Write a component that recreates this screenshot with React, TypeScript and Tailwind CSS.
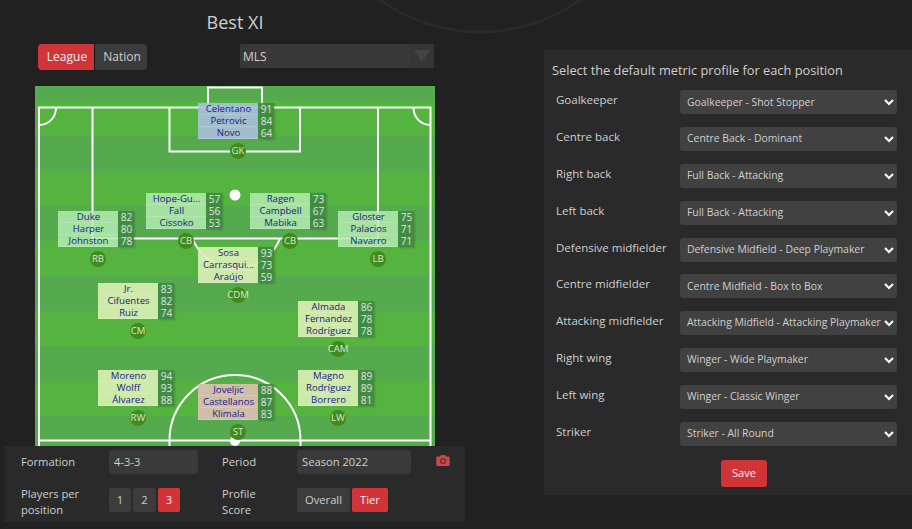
interface Player {
  name: string;
  score: number;
}

interface Slot {
  label: string;
  left: string;
  top: string;
  tone: string;
  players: Player[];
}

const p = (name: string, score: number): Player => ({ name, score });

const slots: Slot[] = [
  { label: 'GK', left: 'left-[163px]', top: 'top-[17px]', tone: 'bg-[#aabfdc]/90', players: [p('Celentano', 91), p('Petrovic', 84), p('Novo', 64)] },
  { label: 'CB', left: 'left-[111px]', top: 'top-[107px]', tone: 'bg-[#b4ebb0]/85', players: [p('Hope-Gu...', 57), p('Fall', 56), p('Cissoko', 53)] },
  { label: 'CB', left: 'left-[215px]', top: 'top-[107px]', tone: 'bg-[#b4ebb0]/85', players: [p('Ragen', 73), p('Campbell', 67), p('Mabika', 63)] },
  { label: 'RB', left: 'left-[23px]', top: 'top-[125px]', tone: 'bg-[#b4ebb0]/85', players: [p('Duke', 82), p('Harper', 80), p('Johnston', 78)] },
  { label: 'LB', left: 'left-[303px]', top: 'top-[125px]', tone: 'bg-[#b4ebb0]/85', players: [p('Gloster', 75), p('Palacios', 71), p('Navarro', 71)] },
  { label: 'CDM', left: 'left-[163px]', top: 'top-[161px]', tone: 'bg-[#dcefb4]/90', players: [p('Sosa', 93), p('Carrasqui...', 73), p('Araújo', 59)] },
  { label: 'CM', left: 'left-[63px]', top: 'top-[197px]', tone: 'bg-[#dcefb4]/90', players: [p('Jr.', 83), p('Cifuentes', 82), p('Ruiz', 74)] },
  { label: 'CAM', left: 'left-[263px]', top: 'top-[215px]', tone: 'bg-[#dcefb4]/90', players: [p('Almada', 86), p('Fernandez', 78), p('Rodríguez', 78)] },
  { label: 'RW', left: 'left-[63px]', top: 'top-[284px]', tone: 'bg-[#dcefb4]/90', players: [p('Moreno', 94), p('Wolff', 93), p('Álvarez', 88)] },
  { label: 'ST', left: 'left-[163px]', top: 'top-[298px]', tone: 'bg-[#d8bfae]/95', players: [p('Joveljic', 88), p('Castellanos', 87), p('Klimala', 83)] },
  { label: 'LW', left: 'left-[263px]', top: 'top-[284px]', tone: 'bg-[#dcefb4]/90', players: [p('Magno', 89), p('Rodríguez', 89), p('Borrero', 81)] },
];

const profiles = [
  ['Goalkeeper', 'Goalkeeper - Shot Stopper'],
  ['Centre back', 'Centre Back - Dominant'],
  ['Right back', 'Full Back - Attacking'],
  ['Left back', 'Full Back - Attacking'],
  ['Defensive midfielder', 'Defensive Midfield - Deep Playmaker'],
  ['Centre midfielder', 'Centre Midfield - Box to Box'],
  ['Attacking midfielder', 'Attacking Midfield - Attacking Playmaker'],
  ['Right wing', 'Winger - Wide Playmaker'],
  ['Left wing', 'Winger - Classic Winger'],
  ['Striker', 'Striker - All Round'],
];

// pitch lines, coordinates are relative to the pitch corner
const PitchLines = () => (
  <svg className="absolute inset-0" width="400" height="360" viewBox="0 0 400 360" fill="none" stroke="#fff" strokeWidth="2">
    {[15, 85, 155, 225, 295].map((y) => (
      <rect key={y} x="0" y={y} width="400" height="35" fill="#55b33f" stroke="none" />
    ))}
    <path d="M4 360V21.5H395.5V360" />
    <path d="M173 21.5V1.5H227V21.5" />
    <path d="M134.5 21.5V65.5H265V21.5" />
    <path d="M57.5 21.5V152.5H343V21.5" />
    <path d="M157.5 152.5A47 47 0 0 0 245 152.5" />
    <path d="M4 39A17 17 0 0 0 21 21.5M395.5 39A17 17 0 0 1 378.5 21.5" />
    <path d="M4 354.5H395.5" />
    <path d="M134.5 360V354.5A65.5 65.5 0 0 1 265.5 354.5V360" />
    <circle cx="200" cy="109" r="5.5" fill="#fff" stroke="none" />
    <circle cx="200" cy="355" r="5" fill="#fff" stroke="none" />
  </svg>
);

const Position = ({ slot }: { slot: Slot }) => (
  <div className={`absolute ${slot.left} ${slot.top} flex w-[80px] flex-col items-center`}>
    <div className="w-full pr-[4px]">
      {slot.players.map((player) => (
        <div key={player.name} className="flex h-[12px] w-[76px] text-[9.6px] leading-[12px]">
          <div className={`w-[60px] overflow-hidden pl-[1px] text-center text-[#20208c] ${slot.tone} shadow-[inset_0_-1px_0_rgba(255,255,255,0.18)]`}>{player.name}</div>
          <div className="w-[16px] bg-[#3e8a42]/90 pl-[1px] text-center text-[10px] text-[#e2e2e2] shadow-[1px_1px_2px_rgba(0,0,0,0.18)]">{player.score}</div>
        </div>
      ))}
    </div>
    <div className="relative mt-[4px] flex size-[16px] items-center justify-center whitespace-nowrap rounded-full bg-[#418a1c] text-[9.6px] leading-none text-[#dbe8d2]">
      {slot.label}
    </div>
  </div>
);

const CameraIcon = () => (
  <svg className="absolute left-[431px] top-[9px]" width="14" height="11" viewBox="0 0 14 11">
    <path d="M1.5 1.5H4L5 0H9L10 1.5H12.5A1.2 1.2 0 0 1 13.7 2.7V9.8A1.2 1.2 0 0 1 12.5 11H1.5A1.2 1.2 0 0 1 .3 9.8V2.7A1.2 1.2 0 0 1 1.5 1.5Z" fill="#c8494b" />
    <circle cx="7" cy="6" r="2.4" fill="none" stroke="#6e2a2c" strokeWidth="1.2" />
  </svg>
);

export default function App() {
  return (
    <div className="relative flex h-[529px] w-[912px] overflow-hidden bg-[#212121] font-['Open_Sans','Liberation_Sans',sans-serif] text-[#cfcfcf]">
      {/* faint circle behind the page */}
      <svg className="absolute left-0 top-0" width="912" height="40" fill="none">
        <circle cx="480" cy="-140" r="172" stroke="#2a2a2a" strokeWidth="3" />
      </svg>

      <div className="relative flex w-[544px] shrink-0 flex-col">
        <div className="w-[470px] pt-[10px] text-center text-[18px] leading-[24px]">Best XI</div>

        <div className="mt-[10px] flex items-start pl-[38px]">
          <button className="h-[26px] w-[57px] rounded-l-[4px] border-r border-black bg-[#d13438] pl-[2px] text-[12px] text-[#f0f0f0]">League</button>
          <button className="h-[26px] w-[52px] rounded-r-[4px] bg-[#3c3c3c] pl-[2px] text-[12px]">Nation</button>
          <div className="ml-[93px] flex h-[24px] w-[194px] items-center justify-between rounded-[2px] bg-[#393939] pl-[3px] pt-[1px] text-[12px]">
            MLS
            <div className="-mt-[1px] flex h-[24px] w-[24px] items-center justify-center bg-[#363636]">
              <div className="border-x-[8px] border-t-[12px] border-x-transparent border-t-[#444444]" />
            </div>
          </div>
        </div>

        <div className="relative ml-[35px] mt-[16px] h-[360px] w-[400px] bg-[#55aa4e]">
          <PitchLines />
          {slots.map((slot) => (
            <Position key={slot.label + slot.left} slot={slot} />
          ))}
        </div>

        <div className="relative ml-[5px] grid h-[76px] w-[460px] grid-cols-[104px_113px_75px_168px] grid-rows-[24px_24px] content-between bg-[#2a2a2a] pb-[10px] pt-[4px] text-[11.2px]">
          <div className="self-center pl-[16px]">Formation</div>
          <div className="flex h-[24px] w-[89px] items-center rounded-[3px] bg-[#3a3a3a] pl-[5px]">4-3-3</div>
          <div className="self-center">Period</div>
          <div className="flex h-[24px] w-[114px] items-center rounded-[3px] bg-[#3a3a3a] pl-[5px]">Season 2022</div>
          <div className="self-center pl-[16px] pt-[4px] leading-[16px]">Players per position</div>
          <div className="flex gap-[2px]">
            <button className="h-[24px] w-[22px] rounded-[2px] bg-[#3c3c3c]">1</button>
            <button className="h-[24px] w-[23px] rounded-[2px] bg-[#3c3c3c]">2</button>
            <button className="h-[24px] w-[22px] rounded-[2px] bg-[#d13438] text-[#f0f0f0]">3</button>
          </div>
          <div className="w-[50px] self-center pt-[4px] leading-[16px]">Profile Score</div>
          <div className="flex gap-[2px]">
            <button className="h-[24px] w-[53px] rounded-[2px] bg-[#3c3c3c]">Overall</button>
            <button className="h-[24px] w-[36px] rounded-[2px] bg-[#d13438] text-[#f0f0f0]">Tier</button>
          </div>
          <CameraIcon />
        </div>
      </div>

      <div className="relative mt-[50px] h-[445px] flex-1 bg-[#2a2a2a]">
        <div className="pl-[8px] pt-[11px] text-[12.8px] leading-[18px]">Select the default metric profile for each position</div>
        <div className="mt-[11.4px] flex flex-col gap-[12.8px] pl-[12px]">
          {profiles.map(([label, value]) => (
            <div key={label} className="flex h-[24px]">
              <div className="w-[124px] text-[11.5px] leading-[20px]">{label}</div>
              <div className="relative h-[24px] w-[217px]">
                <select
                  defaultValue={value}
                  className="block h-full w-full appearance-none rounded-[3px] bg-[#414141] pl-[7px] text-[10.4px] text-[#cfcfcf]"
                >
                  <option>{value}</option>
                </select>
                <svg className="pointer-events-none absolute right-[3px] top-[8px]" width="10" height="8" viewBox="0 0 10 8" fill="none" stroke="#fff" strokeWidth="2">
                  <path d="M1 2L5 6L9 2" />
                </svg>
              </div>
            </div>
          ))}
        </div>
        <button className="ml-[177px] mt-[14.4px] h-[27px] w-[46px] rounded-[3px] bg-[#d13438] text-[11.2px] text-[#eee]">Save</button>
      </div>
    </div>
  );
}
